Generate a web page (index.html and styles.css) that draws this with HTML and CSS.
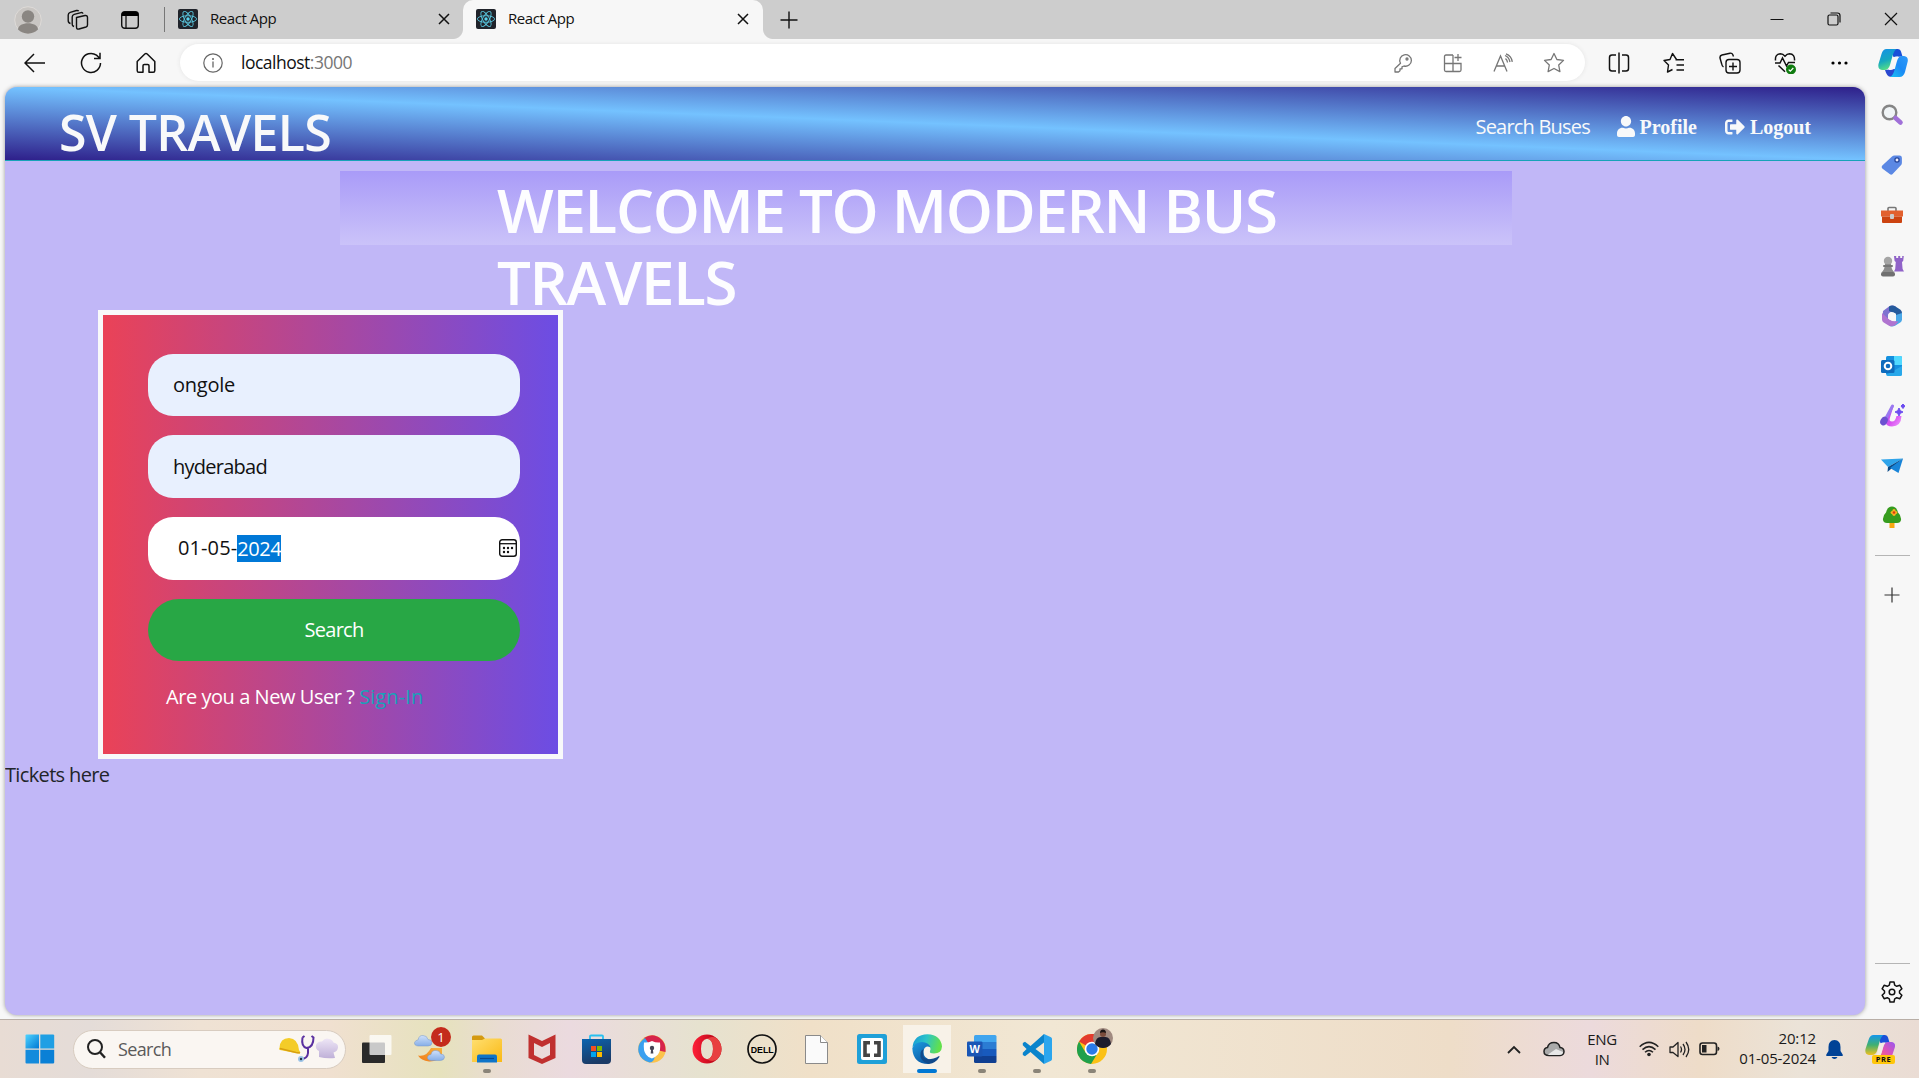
FILE: index.html
```html
<!DOCTYPE html>
<html lang="en">
<head>
<meta charset="utf-8">
<title>React App</title>
<link rel="stylesheet" href="styles.css">
</head>
<body>
<svg class="defs" width="0" height="0" aria-hidden="true">
  <defs>
    <linearGradient id="blueA" x1="0" y1="0" x2="1" y2="1"><stop offset="0" stop-color="#4fd4ff"/><stop offset="1" stop-color="#0078d4"/></linearGradient>
    <linearGradient id="store" x1="0" y1="0" x2="0.3" y2="1"><stop offset="0" stop-color="#0b64b0"/><stop offset="1" stop-color="#1b3a66"/></linearGradient>
    <linearGradient id="folder" x1="0" y1="0" x2="1" y2="1"><stop offset="0" stop-color="#ffdf70"/><stop offset="1" stop-color="#fab914"/></linearGradient>
    <linearGradient id="edgeG" x1="0" y1="0" x2="1" y2="0.2"><stop offset="0" stop-color="#1597d8"/><stop offset="0.5" stop-color="#2cc4c8"/><stop offset="1" stop-color="#62e04c"/></linearGradient>
    <linearGradient id="edgeB" x1="0" y1="0" x2="0.6" y2="1"><stop offset="0" stop-color="#1d9be0"/><stop offset="1" stop-color="#0c59a4"/></linearGradient>
    <linearGradient id="copA" x1="0" y1="0" x2="0.3" y2="1"><stop offset="0" stop-color="#1590e8"/><stop offset="0.6" stop-color="#16a8c0"/><stop offset="1" stop-color="#52dc88"/></linearGradient>
    <linearGradient id="copB" x1="1" y1="0" x2="0" y2="1"><stop offset="0" stop-color="#2f9af8"/><stop offset="0.5" stop-color="#1b8af5"/><stop offset="1" stop-color="#18c4f4"/></linearGradient>
    <linearGradient id="preA" x1="0" y1="0" x2="0" y2="1"><stop offset="0" stop-color="#1496ec"/><stop offset="0.5" stop-color="#40b070"/><stop offset="1" stop-color="#f0c020"/></linearGradient>
    <linearGradient id="preB" x1="1" y1="0" x2="0" y2="1"><stop offset="0" stop-color="#9858f0"/><stop offset="0.5" stop-color="#e454b0"/><stop offset="1" stop-color="#ff8040"/></linearGradient>
    <linearGradient id="moon" x1="0" y1="1" x2="1" y2="0"><stop offset="0" stop-color="#f07a18"/><stop offset="1" stop-color="#f8b440"/></linearGradient>
    <linearGradient id="cloud" x1="0" y1="0" x2="0" y2="1"><stop offset="0" stop-color="#cfe0fa"/><stop offset="1" stop-color="#86aee8"/></linearGradient>
    <linearGradient id="pinkU" x1="0" y1="0" x2="1" y2="1"><stop offset="0" stop-color="#9060f0"/><stop offset="0.6" stop-color="#d850f0"/><stop offset="1" stop-color="#f0a0ff"/></linearGradient>
    <linearGradient id="operaG" x1="0" y1="0" x2="1" y2="0"><stop offset="0" stop-color="#ff2038"/><stop offset="1" stop-color="#a8000f"/></linearGradient>
    <linearGradient id="hatG" x1="0" y1="0" x2="0" y2="1"><stop offset="0" stop-color="#eee6f6"/><stop offset="1" stop-color="#bfb0d8"/></linearGradient>
    <symbol id="react" viewBox="0 0 20 20">
      <rect width="20" height="20" rx="2" fill="#20232a"/>
      <g fill="none" stroke="#58c4dc" stroke-width="0.9"><ellipse cx="10" cy="10" rx="8.6" ry="3.3"/><ellipse cx="10" cy="10" rx="8.6" ry="3.3" transform="rotate(60 10 10)"/><ellipse cx="10" cy="10" rx="8.6" ry="3.3" transform="rotate(120 10 10)"/></g>
      <circle cx="10" cy="10" r="1.7" fill="#58d4f0"/>
    </symbol>
    <symbol id="cross" viewBox="0 0 12 12"><path d="M1 1l10 10M11 1L1 11" fill="none" stroke="#111" stroke-width="1.5"/></symbol>
  </defs>
</svg>

<header class="tabstrip">
  <div class="strip-tools">
    <svg width="28" height="28" viewBox="0 0 28 28"><circle cx="14" cy="14" r="13.3" fill="#c9c6c3" stroke="#dedbd8"/><circle cx="14" cy="10.5" r="6.2" fill="#8a8682"/><path d="M4 23.5C4 15 24 15 24 23.5C19 29 9 29 4 23.5z" fill="#8a8682"/></svg>
    <svg class="i-work" width="22" height="22" viewBox="0 0 22 22" fill="none" stroke="#111" stroke-width="1.4" stroke-linejoin="round"><path d="M9.500 8.500l8.500-2q2.500-.3 2.500 2v7.500q0 1.500-1.500 2l-7 2q-2.500.7-2.500-2z"/><path d="M7 17.500l-1-.5q-.8-.6-.8-2V8q0-2 2-2.600L14 3.600q1.600-.3 2 1"/><path d="M3.500 14.500Q1.200 14 1.200 11.500V6q0-2 2-2.600L9.500 1.500q1.500-.3 2.200.6"/></svg>
    <svg class="i-tabs" width="18" height="18" viewBox="0 0 18 18"><rect x=".7" y=".7" width="16.600" height="16.600" rx="3" fill="none" stroke="#111" stroke-width="1.400"/><path d="M.7 5V3.500Q.7.7 3.500.7h11q2.800 0 2.800 2.800V5z"/><path d="M5 5v12.500" stroke="#111" stroke-width="1.300"/></svg>
  </div>
  <div class="tab"><svg class="fav" width="20" height="20"><use href="#react"/></svg><span>React App</span><svg class="x" width="12" height="12"><use href="#cross"/></svg></div>
  <div class="tab active"><svg class="fav" width="20" height="20"><use href="#react"/></svg><span>React App</span><svg class="x" width="12" height="12"><use href="#cross"/></svg></div>
  <svg class="newtab" width="18" height="18" viewBox="0 0 18 18"><path d="M9 .5v17M.5 9h17" stroke="#111" stroke-width="1.400"/></svg>
  <div class="wincontrols">
    <svg width="14" height="14" viewBox="0 0 14 14"><path d="M0.500 7.500h13" stroke="#111"/></svg>
    <svg width="14" height="14" viewBox="0 0 14 14" fill="none" stroke="#111" stroke-width="1.200"><rect x="1" y="3" width="10" height="10" rx="1.500"/><path d="M3.500 1h7q2.500 0 2.500 2.500v7"/></svg>
    <svg width="14" height="14" viewBox="0 0 14 14" stroke="#111" stroke-width="1.200"><path d="M1 1l12 12M13 1L1 13"/></svg>
  </div>
</header>

<div class="toolbar">
  <nav class="nav-icons">
    <svg width="22" height="20" viewBox="0 0 22 20" fill="none" stroke="#111" stroke-width="1.500"><path d="M1 10h20M10 1L1 10l9 9"/></svg>
    <svg width="22" height="22" viewBox="0 0 22 22" fill="none" stroke="#111" stroke-width="1.500"><path d="M20.500 11A9.500 9.500 0 1 1 16.500 3.200L19.500 6M20 .8V6.500H14"/></svg>
    <svg width="20" height="22" viewBox="0 0 20 22" fill="none" stroke="#111" stroke-width="1.500" stroke-linejoin="round"><path d="M1.200 9.500L8.800 2q1.200-1 2.400 0l7.600 7.500v9q0 1.800-1.600 1.800H13v-6.500q0-1.300-1.300-1.300H8.300Q7 12.500 7 13.800v6.500H2.800q-1.600 0-1.600-1.800z"/></svg>
  </nav>
  <div class="address">
    <svg width="20" height="20" viewBox="0 0 20 20"><circle cx="10" cy="10" r="9.200" fill="none" stroke="#666" stroke-width="1.200"/><path d="M10 8.500v6" stroke="#666" stroke-width="1.300"/><circle cx="10" cy="6" r="1" fill="#666"/></svg>
    <span class="url">localhost<span class="port">:3000</span></span>
    <div class="addr-icons">
      <svg width="20" height="20" viewBox="0 0 20 20" fill="none" stroke="#767676" stroke-width="1.300" stroke-linejoin="round"><path d="M7.500 10.200A5.800 5.800 0 1 1 11 13l-2 .8v2H7v2L5.500 19H2v-3.500z"/><circle cx="14" cy="6" r="1" /></svg>
      <svg width="20" height="20" viewBox="0 0 20 20" fill="none" stroke="#767676" stroke-width="1.300"><path d="M10 2H3Q1.500 2 1.500 3.500V17q0 1.500 1.500 1.500h13.500q1.500 0 1.500-1.500v-6.500H1.500M10 2v16.500M15 1v7M11.500 4.500h7"/></svg>
      <svg width="20" height="20" viewBox="0 0 20 20" fill="none" stroke="#767676" stroke-width="1.300"><path d="M1 18.500L7.500 3 14 18.500M3.500 13h8M12.500 5.500q2 1.800 2 4M12 2.500q4 1.500 5 6.500M13 .8q5.500 2 6.300 8"/></svg>
      <svg width="22" height="22" viewBox="0 0 22 22" fill="none" stroke="#767676" stroke-width="1.300" stroke-linejoin="round"><path d="M11 1.500l2.900 6 6.600.9-4.800 4.600 1.200 6.600L11 16.500l-5.900 3.100 1.200-6.600L1.500 8.400l6.600-.9z"/></svg>
    </div>
  </div>
  <div class="tool-icons">
    <svg width="22" height="22" viewBox="0 0 22 22" fill="none" stroke="#111" stroke-width="1.500"><path d="M8 3H4Q1.500 3 1.500 5.500v11Q1.500 19 4 19h4M11 .5v21M14 3h4q2.500 0 2.500 2.500v11Q20.500 19 18 19h-4"/></svg>
    <svg width="22" height="22" viewBox="0 0 22 22" fill="none" stroke="#111" stroke-width="1.400" stroke-linejoin="round"><path d="M13.500 7.500L9.500 1.500 7 7.500l-6 1 4.500 4.500-1 7 5-2.500M12.500 7.800H21M13.500 13H21M13.500 18H21"/></svg>
    <svg width="22" height="22" viewBox="0 0 22 22" fill="none" stroke="#111" stroke-width="1.400"><rect x="7" y="7.500" width="14" height="13.500" rx="3"/><path d="M14 10.500v8M10 14.500h8M4.500 15Q3 14 2.700 12L1 6q-.4-2.400 2-3l8-1.800q2-.4 2.700 1.400l.8 2"/></svg>
    <svg width="22" height="22" viewBox="0 0 22 22" fill="none" stroke="#111" stroke-width="1.500"><path d="M1.500 8.500Q.8 2 6.500 1.800 9 1.800 11 4.200q2-2.400 4.500-2.400Q21 2 20.500 8.500M1 11h5l2.500-5 4 8 2-3.500H21M4.500 13.500l6.500 6.300"/><circle cx="17" cy="17.500" r="5" fill="#107c10" stroke="none"/><path d="M14.700 17.600l1.600 1.600 3-3.200" stroke="#fff" stroke-width="1.200"/></svg>
    <svg width="22" height="22" viewBox="0 0 22 22"><circle cx="4" cy="11" r="1.600"/><circle cx="10.500" cy="11" r="1.600"/><circle cx="17" cy="11" r="1.600"/></svg>
  </div>
  <svg class="copilot" width="30" height="28" viewBox="0 0 30 28"><path d="M7 21q2 6.500 5 6.800h4l3-8z" fill="#2a48d0"/><path d="M12 0h8q2.500 0 3 2.500l1.500 5-9 .5z" fill="#1a50d8"/><path d="M8.500 0h10q-2.500 1.500-4 7L12 16q-1.500 5-5.500 5H4q-4.500-.5-3.500-6L3.500 5q1.500-5 5-5z" fill="url(#copA)"/><path d="M21.500 28H12q3-1.500 4.500-7l2.500-9q1.500-5 5-5h2q4.500.5 3.700 5.500L27 23q-1.500 5-5.500 5z" fill="url(#copB)"/><path d="M14 11q1-3.500 4.500-3.500h2Q19 9 18 13l-1.500 5q-1 3-4 3h-2q1.500-1.500 2-4z" fill="#f7f7f7"/></svg>
</div>

<main class="workspace">
  <section class="page">
    <header class="site-nav">
      <h1 class="brand">SV TRAVELS</h1>
      <ul class="links">
        <li class="search-link">Search Buses</li>
        <li class="fa-link profile"><svg width="18" height="21" viewBox="0 0 448 512" preserveAspectRatio="none" fill="#f8f9fa"><path d="M224 256c70.700 0 128-57.300 128-128S294.700 0 224 0 96 57.300 96 128s57.300 128 128 128zm89.600 32h-16.700c-22.200 10.200-46.900 16-72.900 16s-50.600-5.800-72.900-16h-16.700C60.200 288 0 348.200 0 422.400V464c0 26.500 21.500 48 48 48h352c26.500 0 48-21.500 48-48v-41.600c0-74.200-60.200-134.400-134.400-134.400z"/></svg><b>Profile</b></li>
        <li class="fa-link logout"><svg width="20" height="20" viewBox="0 0 512 512" fill="#f8f9fa"><path d="M497 273L329 441c-15 15-41 4.500-41-17v-96H152c-13.300 0-24-10.700-24-24v-96c0-13.300 10.700-24 24-24h136V88c0-21.400 25.900-32 41-17l168 168c9.300 9.400 9.300 24.600 0 34zM192 436v-40c0-6.600-5.400-12-12-12H96c-17.700 0-32-14.300-32-32V160c0-17.700 14.300-32 32-32h84c6.600 0 12-5.400 12-12V76c0-6.600-5.400-12-12-12H96c-53 0-96 43-96 96v192c0 53 43 96 96 96h84c6.600 0 12-5.400 12-12z"/></svg><b>Logout</b></li>
      </ul>
    </header>
    <div class="banner"><h2>WELCOME TO MODERN BUS TRAVELS</h2></div>
    <form class="search-form">
      <div class="field"><span class="ongole">ongole</span></div>
      <div class="field"><span class="hyd">hyderabad</span></div>
      <div class="field date"><span class="dm">01-05-</span><span class="sel">2024</span>
        <svg width="18" height="18" viewBox="0 0 18 18"><rect x=".7" y=".7" width="16.600" height="16.600" rx="2.500" fill="none" stroke="#111" stroke-width="1.400"/><path d="M1 4.700h16" stroke="#111" stroke-width="1.300"/><g fill="#111"><circle cx="5" cy="9" r="1.200"/><circle cx="9" cy="9" r="1.200"/><circle cx="13" cy="9" r="1.200"/><circle cx="5" cy="13" r="1.200"/><circle cx="9" cy="13" r="1.200"/></g></svg>
      </div>
      <div class="field submit"><span>Search</span></div>
      <p class="signin"><span class="ask">Are you a New User ?</span> <a>Sign-In</a></p>
    </form>
    <p class="tickets">Tickets here</p>
  </section>

  <aside class="sidebar">
    <svg width="24" height="24" viewBox="0 0 24 24"><circle cx="9.500" cy="9.500" r="6.800" fill="#f0f4f6" stroke="#858585" stroke-width="2.400"/><path d="M15.500 15l5 4.500" stroke="#a070d8" stroke-width="4.600" stroke-linecap="round"/></svg>
    <svg width="24" height="24" viewBox="0 0 24 24"><path d="M12 3.500q1-.8 2.500-.9l5-.2q2.300 0 2.400 2.300v5q0 1.500-1 2.500l-8.500 9q-1.300 1-2.700-.2L2.300 15.400q-1.500-1.500 0-2.900z" fill="#5b88e4"/><circle cx="17" cy="7" r="2.100" fill="#eef" stroke="#27479a" stroke-width="1.300"/></svg>
    <svg width="24" height="24" viewBox="0 0 24 24"><path d="M8 8V5.500Q8 4.500 9 4.500h6q1 0 1 1V8" fill="none" stroke="#777" stroke-width="1.600"/><path d="M1 7.500h22v6H1z" fill="#e2602e"/><path d="M2 13.500h20V19q0 1-1 1H3q-1 0-1-1z" fill="#cc4310"/><rect x="10" y="11" width="4" height="5" rx="1" fill="#ccc"/></svg>
    <svg width="24" height="24" viewBox="0 0 24 24"><path d="M14 2h2.200v2h2V2h2v2h2V2h1.600l-.6 5-1.200 1 .6 7 1.400 2.500H14l1.200-2.500.6-7L14.600 7z" fill="#9063c8"/><circle cx="8" cy="7" r="4.200" fill="#a5a5a5"/><path d="M5 10h6q0 5 3.500 8.500H1.500Q5 15 5 10z" fill="#8c8c8c"/><rect x="3" y="11" width="10" height="2" rx="1" fill="#777"/><rect x="1" y="18" width="14" height="4.500" rx="2" fill="#707070"/></svg>
    <svg width="24" height="24" viewBox="0 0 24 24"><path d="M3 7l6-4.500q3.500-2 7 .2l-5 5.300q-3 1-3 4.500v4L2.500 14z" fill="#7e72d0"/><path d="M9 2.500q3-2 6.500 0l5 3.300Q22 7 22 9v7l-6-1.500v-4.700L9 7z" fill="#255a9c"/><path d="M22 9v6.500q0 2-1.700 3L15 21.700q-3 1.500-6 0l7-4.800V11z" fill="#4aa8e8"/><path d="M2 9v6.500q0 2 1.700 3L9 21.700q3 1.500 6-.5l3.500-3.700L12 17 8 14.500z" fill="#b074d0"/><circle cx="12" cy="12.300" r="4" fill="#f7f7f7"/></svg>
    <svg width="24" height="24" viewBox="0 0 24 24"><rect x="6" y="2" width="16" height="19" rx="1.500" fill="#1490df"/><path d="M14 2h6.500Q22 2 22 3.500V11h-8z" fill="#50d9ff"/><path d="M6 21l16-9v8.500q0 1.500-1.500 1.500H7.500z" fill="#28a8ea"/><rect x="1" y="6" width="13.500" height="13" rx="1.500" fill="#0f6cbd"/><circle cx="8" cy="12" r="3.300" fill="none" stroke="#fff" stroke-width="2"/></svg>
    <svg width="26" height="26" viewBox="0 0 26 26"><path d="M15 2L5 18Q7.500 23.500 13 23.500q9 0 9.500-10.500h-5q-1 5.500-4.500 5.500-3.500-.2-2-4z" fill="url(#pinkU)"/><path d="M13.500 3L6 17" stroke="#9a78f0" stroke-width="3" stroke-linecap="round"/><ellipse cx="5" cy="18" rx="3.500" ry="4.500" transform="rotate(30 5 18)" fill="#6c50d0"/><path d="M20 5l1.300 2.700L24 9l-2.700 1.300L20 13l-1.300-2.700L16 9l2.700-1.300zM24 1l1.800 2L24 5.500 22 3z" fill="#6c4df0" stroke="#6c4df0"/></svg>
    <svg width="24" height="24" viewBox="0 0 24 24"><path d="M1 5.500L23 4.500 8 13z" fill="#2fa4ea"/><path d="M8 13L23 4.500 7.500 18z" fill="#0a4a86"/><path d="M10 14L23 4.500 18.500 19z" fill="#1884d8"/></svg>
    <svg width="24" height="24" viewBox="0 0 24 24"><rect x="9.500" y="16" width="5" height="7" fill="#f8a810"/><path d="M12 1.500Q17 2 18 7.500q3.500 3 3 7.500-.5 3-4 3H7q-3.500 0-4-3-.5-4.500 3-7.500Q7 2 12 1.500z" fill="#369c1e"/><g fill="#ffb020"><circle cx="14" cy="5.700" r="1.600"/><circle cx="14" cy="9.300" r="1.600"/><circle cx="12.200" cy="7.500" r="1.600"/><circle cx="15.800" cy="7.500" r="1.600"/></g><circle cx="14" cy="7.500" r="1.300" fill="#d83b10"/></svg>
    <hr>
    <svg class="plus" width="16" height="16" viewBox="0 0 16 16"><path d="M8 .5v15M.5 8h15" stroke="#333" stroke-width="1.200"/></svg>
    <hr class="low">
    <svg class="gear" width="22" height="22" viewBox="0 0 22 22" fill="none" stroke="#111" stroke-width="1.500" stroke-linejoin="round"><path d="M9 1h4l.7 3.200 2 1.100 3.200-1 2 3.500-2.400 2.200v2l2.400 2.200-2 3.500-3.200-1-2 1.100L13 21H9l-.7-3.200-2-1.100-3.200 1-2-3.500L3.500 12v-2L1.100 7.800l2-3.500 3.200 1 2-1.100z"/><circle cx="11" cy="11" r="2.800"/></svg>
  </aside>
</main>

<footer class="taskbar">
  <svg class="start" width="30" height="30" viewBox="0 0 30 30"><g fill="url(#blueA)"><path d="M1.500.5H14v14H.5v-13q0-1 1-1z"/></g><path d="M15.300.5H28q1.200 0 1.200 1v13H15.300z" fill="#1f9fe4"/><path d="M.5 15.700H14v13.700H1.500q-1 0-1-1z" fill="#148bdc"/><path d="M15.300 15.700h13.900v12.700q0 1-1.200 1H15.300z" fill="#0a80d6"/></svg>
  <div class="searchbox">
    <svg width="19" height="20" viewBox="0 0 19 20" fill="none" stroke="#222" stroke-width="2"><circle cx="8" cy="8" r="7"/><path d="M13 13.300l5 5.500" stroke-width="2.400"/></svg>
    <span>Search</span>
    <svg class="hats" width="62" height="30" viewBox="0 0 62 30"><path d="M1.500 14Q2 4 11 4q9 .5 10 12l1.500 2.500q-2 1.500-5 .5L2 16q-2-1-.5-2z" fill="#f4cc28"/><path d="M2 14.500l16 4 4 .5" stroke="#d8a010" stroke-width="1.500" fill="none"/><path d="M24.500 3.500q-1.500 9 4 10.500 7-.5 7-10.500l-2-1.500M24.500 3.500L26.500 2M30 14v5q-.5 6-7 6" fill="none" stroke="#5a30a0" stroke-width="2"/><circle cx="23" cy="25" r="3" fill="#9cc4e8"/><circle cx="23" cy="25" r="1.200" fill="#234"/><path d="M41 23V17q-4-2-3-6 1.500-4 6-3.500Q47 3.500 51 5q3 0 4.500 3.500 5 1 4.500 5-.5 4-4.500 5L57 24q-8 1-16-1z" fill="url(#hatG)"/></svg>
  </div>
  <ul class="apps">
    <li><svg width="30" height="30" viewBox="0 0 30 30"><rect x="0" y="8.500" width="23" height="20.500" rx="1" fill="#2a2a2a"/><rect x="7.500" y="1" width="22" height="20" rx="1" fill="#fff" fill-opacity=".75"/></svg></li>
    <li><svg width="36" height="36" viewBox="0 0 36 36"><path d="M28 17v6Q24 31 15 30.500 7 29.500 4 24.500q8 2 13-7.500z" fill="url(#moon)"/><path d="M4 15Q0 14.500.5 11.500 1.500 9 4 9q1-5 5-4.500 4 0 5 4 4 0 4 3.200-.2 3.300-4 3.300z" fill="url(#cloud)" stroke="#7898c8" stroke-width=".5"/><path d="M17 29.500q-4-.5-3.500-3.500.7-2.500 3.500-2.500 1-4.500 5-4 4 0 4.500 3.500 4 0 4 3.200-.2 3-4 3.300z" fill="url(#cloud)" stroke="#7898c8" stroke-width=".5"/></svg><b class="badge">1</b></li>
    <li class="running"><svg width="30" height="28" viewBox="0 0 30 28"><path d="M0 2Q0 .5 1.500.5H10L13 3.500V7H0z" fill="#d49a10"/><path d="M0 5h10l3-1.500h15.500q1.500 0 1.500 1.500v22H0z" fill="url(#folder)"/><path d="M5 27.500v-6Q5 19.500 7 19.500h16q2 0 2 2v6z" fill="#0f74c8"/><path d="M8 23.500h14" stroke="#0a4a90" stroke-width="1.200"/></svg></li>
    <li><svg width="28" height="30" viewBox="0 0 28 30"><path d="M.5.500L14 7 27.500.5V24L14 30 .5 24zM6 9v12l8 4 8-4V9l-8 4z" fill="#c0302f" fill-rule="evenodd"/></svg></li>
    <li><svg width="29" height="30" viewBox="0 0 29 30"><path d="M8 6V2.300Q8 1.500 9 1.500h11q1 0 1 .8V6" fill="none" stroke="#28c0f0" stroke-width="1.800"/><path d="M0 5h29v21q0 4-4 4H4q-4 0-4-4z" fill="url(#store)"/><path d="M9 12h5v5H9z" fill="#f25022"/><path d="M15 12h5v5h-5z" fill="#7fba00"/><path d="M9 18h5v5H9z" fill="#00a4ef"/><path d="M15 18h5v5h-5z" fill="#ffb900"/></svg></li>
    <li><svg width="28" height="28" viewBox="0 0 28 28"><circle cx="14" cy="14" r="13.800" fill="#fbc34c"/><path d="M14 14L6 3Q15-3 23 4q5 4 4.500 13z" fill="#d6244c"/><path d="M14 14L7 3Q-1 8 .5 17q2 8 11 10.500Q20 26 14 14z" fill="#39a0f0"/><path d="M14 6q4 2 8 1.500 1 8-2 12-3 3-6 4-4-1-6-4-3-4-2-12 4 .5 8-1.500z" fill="#fff"/><circle cx="14" cy="13" r="2.200" fill="#445"/><path d="M13.200 14h1.600l.6 4.500h-2.800z" fill="#445"/></svg></li>
    <li><svg width="30" height="30" viewBox="0 0 30 30"><path d="M15 .5A14.500 14.500 0 1 0 15 29.500 14.500 14.500 0 0 0 15 .5zm0 4.200q6 .5 6 10.300t-6 10.300Q9 24.500 9 15T15 4.700z" fill="url(#operaG)" fill-rule="evenodd"/><path d="M15 4.700Q20 1.500 25 4.500q4.500 4.500 4.500 10.500T25 25.500q-5 3-10-.2 6-.5 6-10.300T15 4.700z" fill="#e84040"/></svg></li>
    <li><svg width="30" height="30" viewBox="0 0 30 30"><circle cx="15" cy="15" r="14" fill="none" stroke="#111" stroke-width="1.700"/><text class="dell" x="15.200" y="18.500" text-anchor="middle" textLength="23" lengthAdjust="spacingAndGlyphs">DELL</text></svg></li>
    <li><svg width="23" height="29" viewBox="0 0 23 29"><path d="M.5.5h15l7 7v21H.5z" fill="#fafafa" stroke="#8a8a8a"/><path d="M15.500.5v7h7" fill="#fff" stroke="#8a8a8a"/></svg></li>
    <li><svg width="30" height="30" viewBox="0 0 30 30"><rect width="30" height="30" rx="2.500" fill="#1fa0d8"/><rect x="4" y="4" width="22" height="22" rx="2" fill="#fff"/><path d="M13 8.700H8v12.600h5M17 8.700h5v12.600h-5" fill="none" stroke="#444" stroke-width="3.600"/></svg></li>
    <li class="running current"><svg width="30" height="30" viewBox="0 0 30 30"><path d="M.5 13Q2 .5 15.500.2 29 1 30 12.500q-.5 7-8 7-5 0-4-2.500Q20 13 15 11.500 6 9 .5 13z" fill="url(#edgeG)"/><path d="M.3 14Q3 8 10 8q6.500.5 8.500 5-6-2-7 4-.5 8 9 9.500l-4 3.400Q1 30 .3 14z" fill="url(#edgeB)"/><path d="M11.500 15q-3 13 10 9.500 3-1 5.500-2.500.8 0 .4 1-3.500 6-10.400 7Q7 27 8.500 19q.5-3 3-4z" fill="#114a8b"/></svg></li>
    <li class="running"><svg width="30" height="28" viewBox="0 0 30 28"><path d="M7 1.500Q7 0 8.500 0H28q1.500 0 1.500 1.500V7H7z" fill="#41a5ee"/><path d="M7 7h22.500v7H7z" fill="#2b7cd3"/><path d="M7 14h22.500v7H7z" fill="#185abd"/><path d="M7 21h22.500v5.500q0 1.500-1.500 1.500H8.500Q7 28 7 26.500z" fill="#103f91"/><rect x="0" y="6.500" width="15.500" height="15" rx="1.300" fill="#1a56b5"/><text class="word" x="7.800" y="18" text-anchor="middle">W</text></svg></li>
    <li class="running"><svg width="30" height="30" viewBox="0 0 30 30"><path d="M22 0L8.500 12 3 7.700.8 9v2.300L4.600 15 .8 18.700V21l2.200 1.300L8.500 18 22 30V21.500L13.500 15 22 8.500z" fill="#0a84cc"/><path d="M22 0l7 3.300q1 .5 1 1.700v20q0 1.200-1 1.700L22 30z" fill="#2ba6ee"/></svg></li>
    <li class="running"><svg class="chrome" width="36" height="36" viewBox="0 0 36 36"><circle cx="15" cy="21" r="15" fill="#fbc116"/><path d="M15 21L2 13.500Q7 5.500 15 6h13v8.500H15z" fill="#e33b2e"/><path d="M2 13.500Q-1.500 20 1 27q4 8 13 9l7-11.500-12.500 0z" fill="#1fa04c"/><circle cx="15" cy="21" r="7.300" fill="#fff"/><circle cx="15" cy="21" r="5.700" fill="#2a7be8"/><circle cx="26" cy="10" r="10" fill="#a08a80"/><path d="M18 16q1-7 5.500-7h5q4.500 0 5.500 7-3 4-8 4t-8-4z" fill="#1c1c2c"/><circle cx="26" cy="6" r="3" fill="#7a4c3c"/><path d="M23 5q0-3.500 3-3.500T29 5q-3-1.500-6 0z" fill="#1a1414"/></svg></li>
  </ul>
  <div class="tray">
    <svg class="t-chev" width="14" height="9" viewBox="0 0 14 9" fill="none" stroke="#222" stroke-width="1.800"><path d="M1 8l6-6 6 6"/></svg>
    <svg class="t-cloud" width="22" height="16" viewBox="0 0 22 16"><path d="M6 14.500Q1 14.500 1 10.500 1 7 4.500 6.500 5.500 1.500 11 1.500q5 0 6 5 4 .5 4 4t-4 4z" fill="#aaa" stroke="#222" stroke-width="1.500"/><path d="M5 13.500l8-5.500 7 3q0 3-4 3H6z" fill="#e8e8e8"/></svg>
    <div class="lang"><span>ENG</span><span>IN</span></div>
    <svg class="t-wifi" width="20" height="16" viewBox="0 0 20 16" fill="none" stroke="#222" stroke-width="1.500"><path d="M.7 5.800Q10-3 19.300 5.800M3.500 8.600q6.500-6 13 0M6 11.300q4-3.700 8 0"/><circle cx="10" cy="13.500" r="1.800" fill="#222" stroke="none"/></svg>
    <svg class="t-vol" width="21" height="17" viewBox="0 0 21 17" fill="none" stroke="#222" stroke-width="1.300" stroke-linejoin="round"><path d="M1 6v5.500h3L9 15.500V1.500L4 6zM11.500 5.500q2 3 0 6M14 3q4 5.500 0 11M17 1q5.500 7.500 0 15"/></svg>
    <svg class="t-bat" width="21" height="14" viewBox="0 0 21 14"><rect x="1" y="1" width="16.500" height="11.500" rx="2.500" fill="none" stroke="#222" stroke-width="1.600"/><rect x="3" y="3" width="4.500" height="7.500" fill="#222"/><path d="M18.500 4.500q2 .3 2 2.300t-2 2.300z" fill="#222"/></svg>
    <div class="clock"><span class="time">20:12</span><span class="day">01-05-2024</span></div>
    <svg class="t-bell" width="17" height="19" viewBox="0 0 17 19" fill="#004296"><path d="M8.500 0Q14.500.3 14.500 7v4l2.200 3.500V16H.3v-1.500L2.500 11V7Q2.500.3 8.500 0zM5.500 17h6q-1 2-3 2t-3-2z"/></svg>
    <div class="pre"><svg width="30" height="28" viewBox="0 0 30 28"><path d="M12 0h8q2.500 0 3 2.500l1.500 5-9 .5z" fill="#1a50d8"/><path d="M8.500 0h10q-2.500 1.500-4 7L12 16q-1.500 4-5 4H4q-4.500-.5-3.500-6L3.500 5q1.500-5 5-5z" fill="url(#preA)"/><path d="M22 26H10q4-1 5.500-5l3-10q1.500-4 5-4h3q4.500.5 3.300 5.500L27 21q-1.500 5-5 5z" fill="url(#preB)"/><path d="M14 11q1-3.500 4.500-3.500h2Q19 9 18 13l-1.500 5q-1 3-4 3h-2q1.500-1.500 2-4z" fill="#f3ece6"/></svg><b>PRE</b></div>
  </div>
</footer>
</body>
</html>
```
FILE: styles.css
```css
* { box-sizing: border-box; margin: 0; padding: 0; }
ul { list-style: none; }
svg { display: block; flex: none; }
.defs { position: absolute; }
body {
  width: 1919px; height: 1078px; overflow: hidden;
  display: flex; flex-direction: column;
  background: #f7f7f7; color: #212529;
  font-family: "Open Sans", "Noto Sans", sans-serif;
  font-size: 20px; line-height: 1.5; white-space: nowrap;
}

/* browser tabs */
.tabstrip { height: 39px; flex: none; display: flex; align-items: center; background: #cdcdcd; }
.strip-tools { width: 165px; height: 25px; border-right: 1px solid #777; display: flex; align-items: center; padding-left: 14px; flex: none; }
.i-work { margin-left: 25px; }
.i-tabs { margin-left: 32px; }
.tab { width: 298px; height: 39px; display: flex; align-items: center; padding: 0 13px 1px 13px; font-size: 15px; color: #111; position: relative; flex: none; }
.tab span { margin-left: 12px; flex: 1; letter-spacing: -0.45px; padding-bottom: 2px; }
.tab.active { width: 300px; background: #f7f7f7; border-radius: 10px 10px 0 0; padding-right: 14px; }
.tab.active::before, .tab.active::after { content: ""; position: absolute; bottom: 0; width: 10px; height: 10px; }
.tab.active::before { left: -10px; background: radial-gradient(circle at 0 0, #cdcdcd 9.5px, #f7f7f7 10.5px); }
.tab.active::after { right: -10px; background: radial-gradient(circle at 100% 0, #cdcdcd 9.5px, #f7f7f7 10.5px); }
.newtab { margin-left: 17px; }
.wincontrols { margin-left: auto; display: flex; gap: 43px; padding: 0 21px 1px 0; }

/* address bar row */
.toolbar { height: 48px; flex: none; display: flex; align-items: center; background: #f7f7f7; padding-bottom: 1px; }
.nav-icons { display: flex; gap: 34px; padding-left: 24px; width: 180px; align-items: center; flex: none; }
.address { width: 1405px; height: 37px; border-radius: 19px; background: #fff; box-shadow: 0 0 4px #e4e4e4; display: flex; align-items: center; padding-left: 23px; padding-right: 20px; flex: none; }
.url { margin-left: 18px; font-size: 17.5px; color: #111; letter-spacing: -0.5px; padding-bottom: 1px; }
.port { color: #767676; }
.addr-icons { margin-left: auto; display: flex; align-items: center; gap: 30px; }
.tool-icons { display: flex; gap: 33.3px; padding-left: 23px; }
.copilot { margin-left: 27px; margin-top: 1px; }

/* viewport and side rail */
.workspace { height: 932px; flex: none; display: flex; padding-left: 5px; }
.page { width: 1860px; height: 928px; border-radius: 12px; background: #c1b7f7; overflow: hidden; box-shadow: 0 0 4px #999; flex: none; }
.sidebar { flex: 1; display: flex; flex-direction: column; align-items: center; padding: 16px 0 0 1px; gap: 26.2px; }
.sidebar svg { margin-left: -1px; }
.sidebar svg[width="26"] { margin-top: -1px; margin-bottom: -1px; }
.sidebar hr { width: 35px; border: 0; height: 1px; background: #b5b5b5; }
.sidebar .plus { margin-top: 5px; }
.sidebar .low { margin-top: auto; }
.sidebar .gear { margin-top: -9px; margin-bottom: 16px; }

/* site header */
.site-nav { height: 74px; display: flex; align-items: center; justify-content: space-between; border-bottom: 1px solid #17a2b8; background: linear-gradient(to bottom left, #2e1f8a 0%, #74c2ff 50%, #2e1f8a 100%); padding: 0 54px 0 54px; color: #f8f9fa; }
.brand { font-size: 50px; line-height: 60px; font-weight: 600; letter-spacing: -0.65px; padding-top: 16px; }
.links { display: flex; align-items: center; padding-top: 6px; }
.search-link { letter-spacing: -0.8px; width: 115px; }
.fa-link { display: flex; align-items: center; gap: 5px; margin-left: 27px; font-family: "Liberation Serif", serif; font-size: 20px; }
.profile { gap: 4px; margin-right: 1px; }

/* headline band, its second line hangs below */
.banner { width: 1172px; height: 74px; margin: 10px 0 0 335px; padding-left: 157px; background: linear-gradient(#a99bf8, #cbc3f9); }
.banner h2 { width: 860px; white-space: normal; font-size: 60px; line-height: 72px; font-weight: 600; color: #fdfdff; padding-top: 3px; letter-spacing: -1.3px; }

/* trip search */
.search-form { width: 465px; height: 449px; margin: 65px 0 0 93px; border: 5px solid #f8f9fa; background: linear-gradient(90deg, #ea4257, #6c4de4); padding: 38.7px 38px 0 45px; display: flex; flex-direction: column; gap: 19.17px; position: relative; }
.field { height: 62.5px; border-radius: 25px; background: #e8f0fe; color: #111; padding: 1px 3px 0 25px; display: flex; align-items: center; flex: none; letter-spacing: -0.25px; }
.hyd { letter-spacing: -0.75px; }
.field.date { background: #fff; padding: 0 3px 0 30px; }
.dm { letter-spacing: 0.1px; }
.sel { background: #0078d7; color: #fff; line-height: 27px; letter-spacing: -0.4px; }
.date svg { margin-left: auto; margin-top: -1px; }
.field.submit { background: #28a745; color: #fff; border-radius: 32px; justify-content: center; padding: 1px 0 0; letter-spacing: -0.7px; }
.signin { color: #fff; margin: 2px 0 0 18px; letter-spacing: -0.45px; }
.signin a { color: #17a2b8; letter-spacing: 0.1px; }
.tickets { letter-spacing: -0.65px; padding-top: 1px; }

/* desktop taskbar */
.taskbar { height: 59px; flex: none; border-top: 1px solid #b8aea6; display: flex; align-items: center; background: linear-gradient(90deg, #e8dcd4 0, #e4dcd8 90px, #efe2d4 200px, #f0e0d0 330px, #e6e2bd 440px, #e9dcd2 500px, #ebdadf 570px, #e6e2cf 700px, #f0e0c8 810px, #f1e7d4 1050px, #eeddc8 1450px, #ecdadc 1590px, #eedcc8 1700px, #ebe3d8 1800px, #eadcd4 1919px); }
.start { margin-left: 25px; }
.searchbox { margin-left: 18px; width: 273px; height: 39px; border-radius: 20px; background: #faf6f2; border: 1px solid #d8ccc0; display: flex; align-items: center; padding: 0 5px 0 13px; font-size: 18px; color: #5a5a5a; flex: none; }
.searchbox span { margin-left: 12px; letter-spacing: -0.65px; }
.hats { margin-left: auto; }
.apps { display: flex; margin-left: 3px; }
.apps li { width: 55px; height: 48px; display: flex; align-items: center; justify-content: center; position: relative; }
.badge { position: absolute; left: 27px; top: 2px; width: 20px; height: 20px; border-radius: 50%; background: #c42b1c; color: #fff; font-size: 13px; line-height: 20px; text-align: center; font-weight: 400; }
.running::after { content: ""; position: absolute; bottom: 0; left: 23.500px; width: 8px; height: 4px; border-radius: 2px; background: #8a8478; }
.current { background: linear-gradient(#f8f2e8, #f8f2e8) center / 48px 48px no-repeat; }
.current::after { left: 17.5px; width: 20px; background: #0078d4; }
.chrome { margin: -6px 0 0 6px; }
.dell { font: 700 9.500px "Liberation Sans", sans-serif; }
.word { font: 700 11px "Liberation Sans", sans-serif; fill: #fff; }
.tray { margin-left: auto; display: flex; align-items: center; font-size: 15px; line-height: 20px; color: #1a1a1a; padding-right: 24px; }
.t-cloud { margin-left: 22px; }
.lang { display: flex; flex-direction: column; align-items: center; width: 30px; margin-left: 22px; letter-spacing: -0.4px; padding-bottom: 1px; }
.t-wifi { margin-left: 22px; }
.t-vol { margin-left: 10px; }
.t-bat { margin-left: 9px; }
.clock { display: flex; flex-direction: column; align-items: flex-end; width: 78px; margin-left: 18px; letter-spacing: -0.15px; padding-bottom: 2px; }
.t-bell { margin-left: 10px; }
.pre { margin-left: 22px; position: relative; }
.pre b { position: absolute; left: 7px; bottom: -1px; width: 23px; height: 9px; border-radius: 2px; background: #ffc60a; color: #111; font-size: 7.500px; line-height: 9px; text-align: center; letter-spacing: .5px; }
```
